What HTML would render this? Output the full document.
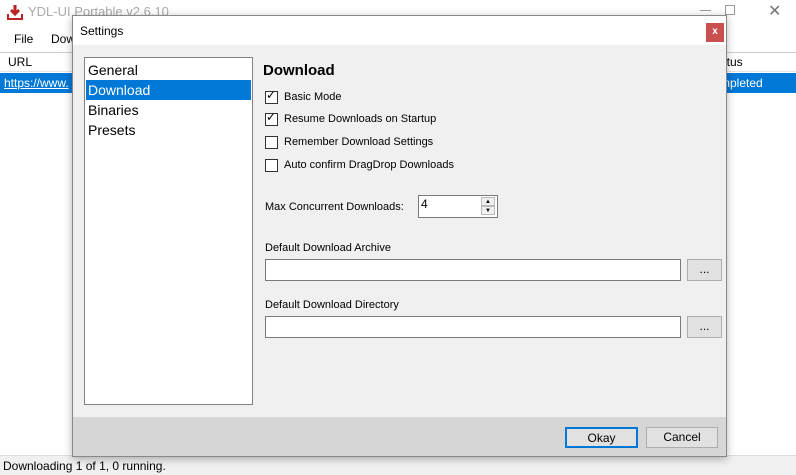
<!DOCTYPE html>
<html><head><style>
*{margin:0;padding:0;box-sizing:border-box}
body{width:796px;height:475px;position:relative;background:#fff;font-family:"Liberation Sans",sans-serif;font-size:12px;color:#000;overflow:hidden}
.a{position:absolute}
.cb{position:absolute;width:13px;height:13px;border:1px solid #333;background:#fff}
.btn{position:absolute;background:#e1e1e1;border:1px solid #adadad;text-align:center;font-size:12px}
.tb{position:absolute;background:#fff;border:1px solid #7a7a7a}
</style></head><body>
<div class="a" style="left:0;top:0;width:796px;height:27px;background:#fff"></div>
<svg class="a" style="left:7px;top:4px" width="16" height="16"><path d="M8 1v9M4 6l4 4 4-4" stroke="#b22" stroke-width="3" fill="none"/><path d="M1 10v5h14v-5" stroke="#b22" stroke-width="2" fill="none"/></svg>
<div class="a" style="left:28px;top:4px;font-size:13px;color:#aaa">YDL-UI Portable v2.6.10</div>
<div class="a" style="left:700px;top:10px;width:11px;height:1px;background:#999"></div>
<div class="a" style="left:725px;top:5px;width:10px;height:10px;border:1px solid #999"></div>
<div class="a" style="left:768px;top:1px;font-size:16px;color:#777">✕</div>
<div class="a" style="left:14px;top:32px;font-size:12px">File</div>
<div class="a" style="left:51px;top:32px;font-size:12px">Dow</div>
<div class="a" style="left:0;top:52px;width:796px;height:20px;background:#fff;border-top:1px solid #ccc;border-bottom:1px solid #e5e5e5"></div>
<div class="a" style="left:8px;top:55px">URL</div>
<div class="a" style="left:720px;top:55px">atus</div>
<div class="a" style="left:0;top:73px;width:796px;height:20px;background:#0078d7"></div>
<div class="a" style="left:4px;top:76px;color:#fff;text-decoration:underline">https://www.</div>
<div class="a" style="left:720px;top:76px;color:#fff">mpleted</div>
<div class="a" style="left:0;top:455px;width:796px;height:20px;background:#f0f0f0;border-top:1px solid #ddd"></div>
<div class="a" style="left:3px;top:459px;font-size:12px">Downloading 1 of 1, 0 running.</div>
<div class="a" style="left:72px;top:15px;width:655px;height:442px;background:#f0f0f0;border:1px solid #888;box-shadow:0 2px 8px rgba(0,0,0,.3)"></div>
<div class="a" style="left:73px;top:16px;width:653px;height:29px;background:#fff"></div>
<div class="a" style="left:80px;top:24px;font-size:12px">Settings</div>
<div class="a" style="left:706px;top:23px;width:18px;height:19px;background:#c9504f;color:#fff;font-size:10px;text-align:center;line-height:18px;font-weight:bold">x</div>
<div class="a" style="left:73px;top:417px;width:653px;height:39px;background:#d6d6d6"></div>
<div class="a" style="left:84px;top:57px;width:169px;height:348px;background:#fff;border:1px solid #828282"></div>
<div class="a" style="left:86px;top:80px;width:165px;height:20px;background:#0078d7"></div>
<div class="a" style="left:88px;top:62px;font-size:14px">General</div>
<div class="a" style="left:88px;top:82px;font-size:14px;color:#fff">Download</div>
<div class="a" style="left:88px;top:102px;font-size:14px">Binaries</div>
<div class="a" style="left:88px;top:122px;font-size:14px">Presets</div>
<div class="a" style="left:263px;top:62px;font-size:15px;font-weight:bold">Download</div>
<div class="cb" style="left:265px;top:91px"></div><div class="a" style="left:266px;top:88px;font-size:12px">✓</div>
<div class="a" style="left:284px;top:91px;font-size:11px">Basic Mode</div>
<div class="cb" style="left:265px;top:113px"></div><div class="a" style="left:266px;top:110px;font-size:12px">✓</div>
<div class="a" style="left:284px;top:113px;font-size:11px">Resume Downloads on Startup</div>
<div class="cb" style="left:265px;top:136px"></div>
<div class="a" style="left:284px;top:136px;font-size:11px">Remember Download Settings</div>
<div class="cb" style="left:265px;top:159px"></div>
<div class="a" style="left:284px;top:159px;font-size:11px">Auto confirm DragDrop Downloads</div>
<div class="a" style="left:265px;top:201px;font-size:11px">Max Concurrent Downloads:</div>
<div class="tb" style="left:418px;top:195px;width:80px;height:23px"></div>
<div class="a" style="left:421px;top:197px;font-size:12px">4</div>
<div class="a" style="left:481px;top:197px;width:14px;height:9px;border:1px solid #bbb;background:#f0f0f0;font-size:6px;text-align:center;line-height:8px">▲</div>
<div class="a" style="left:481px;top:206px;width:14px;height:9px;border:1px solid #bbb;background:#f0f0f0;font-size:6px;text-align:center;line-height:8px">▼</div>
<div class="a" style="left:265px;top:242px;font-size:11px">Default Download Archive</div>
<div class="tb" style="left:265px;top:259px;width:416px;height:22px"></div>
<div class="btn" style="left:687px;top:259px;width:35px;height:22px;line-height:18px">...</div>
<div class="a" style="left:265px;top:299px;font-size:11px">Default Download Directory</div>
<div class="tb" style="left:265px;top:316px;width:416px;height:22px"></div>
<div class="btn" style="left:687px;top:316px;width:35px;height:22px;line-height:18px">...</div>
<div class="btn" style="left:565px;top:427px;width:73px;height:21px;line-height:18px;border:2px solid #0078d7">Okay</div>
<div class="btn" style="left:646px;top:427px;width:72px;height:21px;line-height:19px">Cancel</div>
</body></html>
